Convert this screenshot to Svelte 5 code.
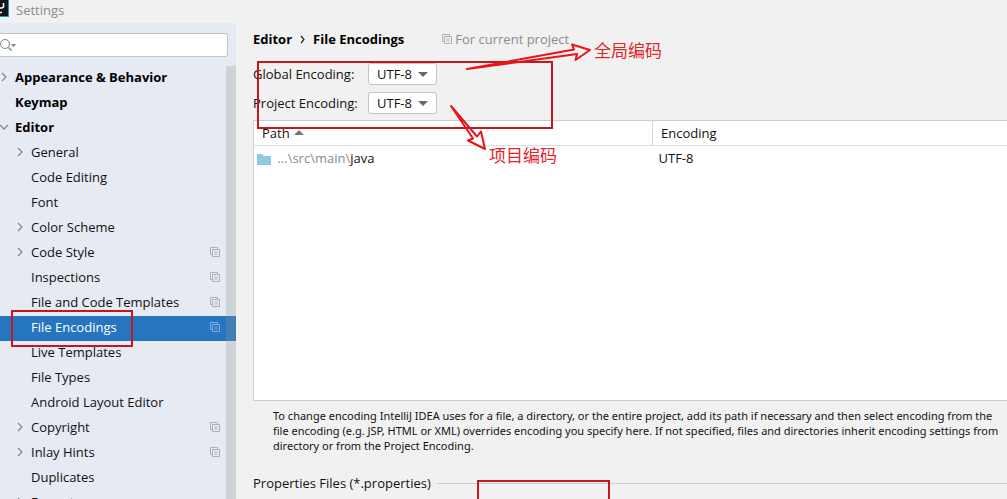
<script lang="ts">
  type TreeItem = {
    label: string;
    level: number;
    arrow?: 'open' | 'closed';
    project?: boolean;
  };

  const items: TreeItem[] = [
    { label: 'Appearance & Behavior', level: 0, arrow: 'closed' },
    { label: 'Keymap', level: 0 },
    { label: 'Editor', level: 0, arrow: 'open' },
    { label: 'General', level: 1, arrow: 'closed' },
    { label: 'Code Editing', level: 1 },
    { label: 'Font', level: 1 },
    { label: 'Color Scheme', level: 1, arrow: 'closed' },
    { label: 'Code Style', level: 1, arrow: 'closed', project: true },
    { label: 'Inspections', level: 1, project: true },
    { label: 'File and Code Templates', level: 1, project: true },
    { label: 'File Encodings', level: 1, project: true },
    { label: 'Live Templates', level: 1 },
    { label: 'File Types', level: 1 },
    { label: 'Android Layout Editor', level: 1 },
    { label: 'Copyright', level: 1, arrow: 'closed', project: true },
    { label: 'Inlay Hints', level: 1, arrow: 'closed', project: true },
    { label: 'Duplicates', level: 1 },
    { label: 'Emmet', level: 1, arrow: 'closed' }
  ];

  const encodings = ['UTF-8', 'GBK', 'ISO-8859-1'];

  let selected = $state('File Encodings');
  let query = $state('');
  let globalEncoding = $state('UTF-8');
  let projectEncoding = $state('UTF-8');
</script>

{#snippet copyIcon()}
  <svg class="copy-icon" width="10" height="10" viewBox="0 0 10 10" aria-hidden="true">
    <path d="M2.5 7.5H.5v-7h7v2M2.5 2.5h7v7h-7zM4.5 5h3M4.5 7h3" />
  </svg>
{/snippet}

<div class="settings">
  <header class="title-bar">
    <svg width="9" height="17" viewBox="0 0 9 17" aria-hidden="true">
      <rect width="9" height="17" fill="#2793ad" />
      <rect width="8" height="16" fill="#10151b" />
      <path d="M3.5 3v3q0 2-2 2H0M0 12.5h2" fill="none" stroke="#fff" stroke-width="1.5" />
    </svg>
    <span>Settings</span>
  </header>

  <div class="body">
    <aside class="sidebar">
      <label class="search">
        <svg width="16" height="14" viewBox="0 0 16 14" aria-hidden="true">
          <circle cx="5" cy="6" r="4.5" fill="none" stroke="#7f8489" />
          <path d="M8.5 9.5l3 3" stroke="#7f8489" stroke-width="1.4" />
          <path d="M11 6h5l-2.5 3z" fill="#7f8489" />
        </svg>
        <input type="text" aria-label="Search settings" bind:value={query} />
      </label>

      <nav class="tree" aria-label="Settings categories">
        {#each items as item}
          <button
            class="row"
            class:top={item.level === 0}
            class:selected={selected === item.label}
            onclick={() => (selected = item.label)}
          >
            <span class="arrow">
              {#if item.arrow}
                <svg width="10" height="10" viewBox="0 0 10 10" aria-hidden="true">
                  <path d={item.arrow === 'open' ? 'M1 3l4 4 4-4' : 'M3 1l4 4-4 4'} />
                </svg>
              {/if}
            </span>
            <span class="label">{item.label}</span>
            {#if item.project}{@render copyIcon()}{/if}
          </button>
        {/each}
        <div class="scrollbar" aria-hidden="true"></div>
      </nav>
    </aside>

    <main class="content">
      <div class="crumbs">
        <h1>Editor</h1>
        <svg width="5" height="9" viewBox="0 0 5 9" aria-hidden="true">
          <path d="M1 1l3 3.5-3 3.5" fill="none" stroke="#222" stroke-width="1.2" />
        </svg>
        <h1>File Encodings</h1>
        <span class="scope">{@render copyIcon()}For current project</span>
      </div>

      <div class="form">
        <label for="global-encoding">Global Encoding:</label>
        <div class="combo">
          <select id="global-encoding" bind:value={globalEncoding}>
            {#each encodings as enc}<option>{enc}</option>{/each}
          </select>
        </div>
        <label for="project-encoding">Project Encoding:</label>
        <div class="combo">
          <select id="project-encoding" bind:value={projectEncoding}>
            {#each encodings as enc}<option>{enc}</option>{/each}
          </select>
        </div>
      </div>

      <div class="table-box">
        <table>
          <thead>
            <tr>
              <th class="path-col">Path <span class="sort"></span></th>
              <th>Encoding</th>
            </tr>
          </thead>
          <tbody>
            <tr>
              <td>
                <svg width="14" height="12" viewBox="0 0 14 12" aria-hidden="true">
                  <path d="M0 1h5l2 2h7v9H0z" fill="#8fcbe0" />
                </svg>
                <span class="dim">...\src\main\</span>java
              </td>
              <td>UTF-8</td>
            </tr>
          </tbody>
        </table>
      </div>

      <p class="hint">
        To change encoding IntelliJ IDEA uses for a file, a directory, or the entire project, add its path if necessary and then select encoding from the<br />
        file encoding (e.g. JSP, HTML or XML) overrides encoding you specify here. If not specified, files and directories inherit encoding settings from<br />
        directory or from the Project Encoding.
      </p>

      <div class="section">
        <h2>Properties Files (*.properties)</h2>
        <hr />
      </div>
    </main>
  </div>

  <!-- markup notes drawn over the dialog -->
  <svg class="marks" aria-hidden="true">
    <g class="boxes">
      <rect x="258" y="62" width="294" height="66" />
      <rect x="12" y="311" width="120" height="35" />
      <rect x="478" y="481" width="131" height="60" />
    </g>
    <g class="pointers">
      <path d="M467 69L574 49.5 572 44.5 590 50 575.5 60 577 54z" />
      <path d="M451 106L477 136.5 481 131.5 485 149 468 140.5 473 138.5z" />
    </g>
  </svg>
  <span class="note global">全局编码</span>
  <span class="note project">项目编码</span>
</div>

<style>
  :global(body) {
    margin: 0;
  }

  .settings {
    position: relative;
    display: flex;
    flex-direction: column;
    height: 100vh;
    overflow: hidden;
    background: #f1f1f1;
    color: #111;
    font-family: 'Open Sans', 'Noto Sans CJK SC', sans-serif;
    font-size: 13px;
    line-height: 20px;
  }

  .title-bar {
    display: flex;
    flex-shrink: 0;
    align-items: flex-start;
    gap: 7px;
    height: 23px;
    color: #8c8c8c;
  }

  .body {
    display: flex;
    flex: 1;
    min-height: 0;
  }

  .sidebar {
    display: flex;
    flex-direction: column;
    flex: 0 0 236px;
    background: #e6eaf2;
  }

  .search {
    display: flex;
    align-items: center;
    box-sizing: border-box;
    height: 24px;
    margin: 10px 8px 9px 0;
    border: 1px solid #c0c3c7;
    border-left: 0;
    border-radius: 0 3px 3px 0;
    background: #fff;
  }

  .search input {
    flex: 1;
    min-width: 0;
    border: 0;
    outline: 0;
    background: transparent;
    font: inherit;
  }

  .tree {
    position: relative;
  }

  .row {
    display: flex;
    align-items: center;
    width: 100%;
    height: 25px;
    padding: 0 16px 4px 15px;
    border: 0;
    background: none;
    color: inherit;
    font: inherit;
    text-align: left;
  }

  .row.top {
    padding-left: 0;
    color: #000;
    font-weight: 700;
  }

  .row.selected {
    background: #2675bf;
    color: #fff;
  }

  .arrow {
    display: flex;
    width: 15px;
  }

  .row:not(.top) .arrow {
    width: 16px;
  }

  .row.top .arrow svg {
    margin-left: -1px;
  }

  .arrow path {
    fill: none;
    stroke: #85898f;
    stroke-width: 1.3;
  }

  .label {
    flex: 1;
  }

  .copy-icon {
    flex-shrink: 0;
    fill: none;
    stroke: #adb1b7;
  }

  .selected .copy-icon {
    stroke: #7fb0dc;
  }

  .scrollbar {
    position: absolute;
    top: 0;
    right: 0;
    bottom: 0;
    width: 10px;
    background: rgba(140, 150, 145, 0.28);
  }

  .content {
    flex: 1;
    min-width: 0;
    padding: 6px 0 0 17px;
  }

  .crumbs {
    display: flex;
    align-items: center;
    gap: 8px;
  }

  h1,
  h2 {
    margin: 0;
    font-size: 13px;
    font-weight: 400;
  }

  h1 {
    color: #000;
    font-weight: 700;
  }

  .scope {
    display: flex;
    align-items: center;
    gap: 3px;
    margin-left: 30px;
    color: #8c8c8c;
  }

  .form {
    display: grid;
    grid-template-columns: 100px max-content;
    gap: 7px 15px;
    align-items: center;
    margin-top: 14px;
    white-space: nowrap;
  }

  .combo {
    position: relative;
    height: 22px;
  }

  .combo::after,
  .sort {
    display: inline-block;
    border: 5px solid transparent;
  }

  .combo::after {
    content: '';
    position: absolute;
    top: 9px;
    right: 9px;
    border-top-color: #686868;
    border-bottom: 0;
    pointer-events: none;
  }

  select {
    width: 69px;
    height: 22px;
    padding: 0 8px;
    border: 1px solid #c4c4c4;
    border-radius: 3px;
    background: #fff;
    color: inherit;
    font: inherit;
    line-height: 20px;
    appearance: none;
  }

  .table-box {
    min-height: 279px;
    margin-top: 6px;
    border: 1px solid #cdcdcd;
    border-right: 0;
    background: #fff;
  }

  table {
    width: 100%;
    border-collapse: collapse;
    table-layout: fixed;
  }

  th {
    height: 24px;
    padding: 0 8px;
    border-bottom: 1px solid #dcdfe1;
    font-weight: 400;
    text-align: left;
  }

  .path-col {
    width: 382px;
    border-right: 1px solid #d5d5d5;
  }

  .sort {
    margin-left: 1px;
    border-top: 0;
    border-bottom-color: #767676;
    vertical-align: 3px;
  }

  td {
    height: 23px;
    padding: 0 6px 0 3px;
  }

  td + td {
    padding-left: 6px;
  }

  td svg {
    margin-right: 3px;
    vertical-align: -2px;
  }

  .dim {
    color: #8c8c8c;
  }

  .hint {
    margin: 7px 0 0 20px;
    font-family: 'Noto Sans', sans-serif;
    font-size: 11px;
    line-height: 15px;
    white-space: nowrap;
  }

  .section {
    display: flex;
    align-items: center;
    gap: 6px;
    margin-top: 20px;
  }

  hr {
    flex: 1;
    margin: 0;
    border: 0;
    border-top: 1px solid #cfcfcf;
  }

  .marks {
    position: absolute;
    inset: 0;
    width: 100%;
    height: 100%;
    fill: none;
    stroke-width: 2;
    pointer-events: none;
  }

  .boxes {
    stroke: #c4161c;
  }

  .pointers {
    stroke: #e8141a;
    stroke-linejoin: round;
  }

  .note {
    position: absolute;
    color: #e0262b;
    font-family: 'Noto Sans CJK SC', sans-serif;
    font-size: 17px;
    line-height: 20px;
  }

  .note.global {
    top: 40px;
    left: 594px;
  }

  .note.project {
    top: 145px;
    left: 489px;
  }
</style>
